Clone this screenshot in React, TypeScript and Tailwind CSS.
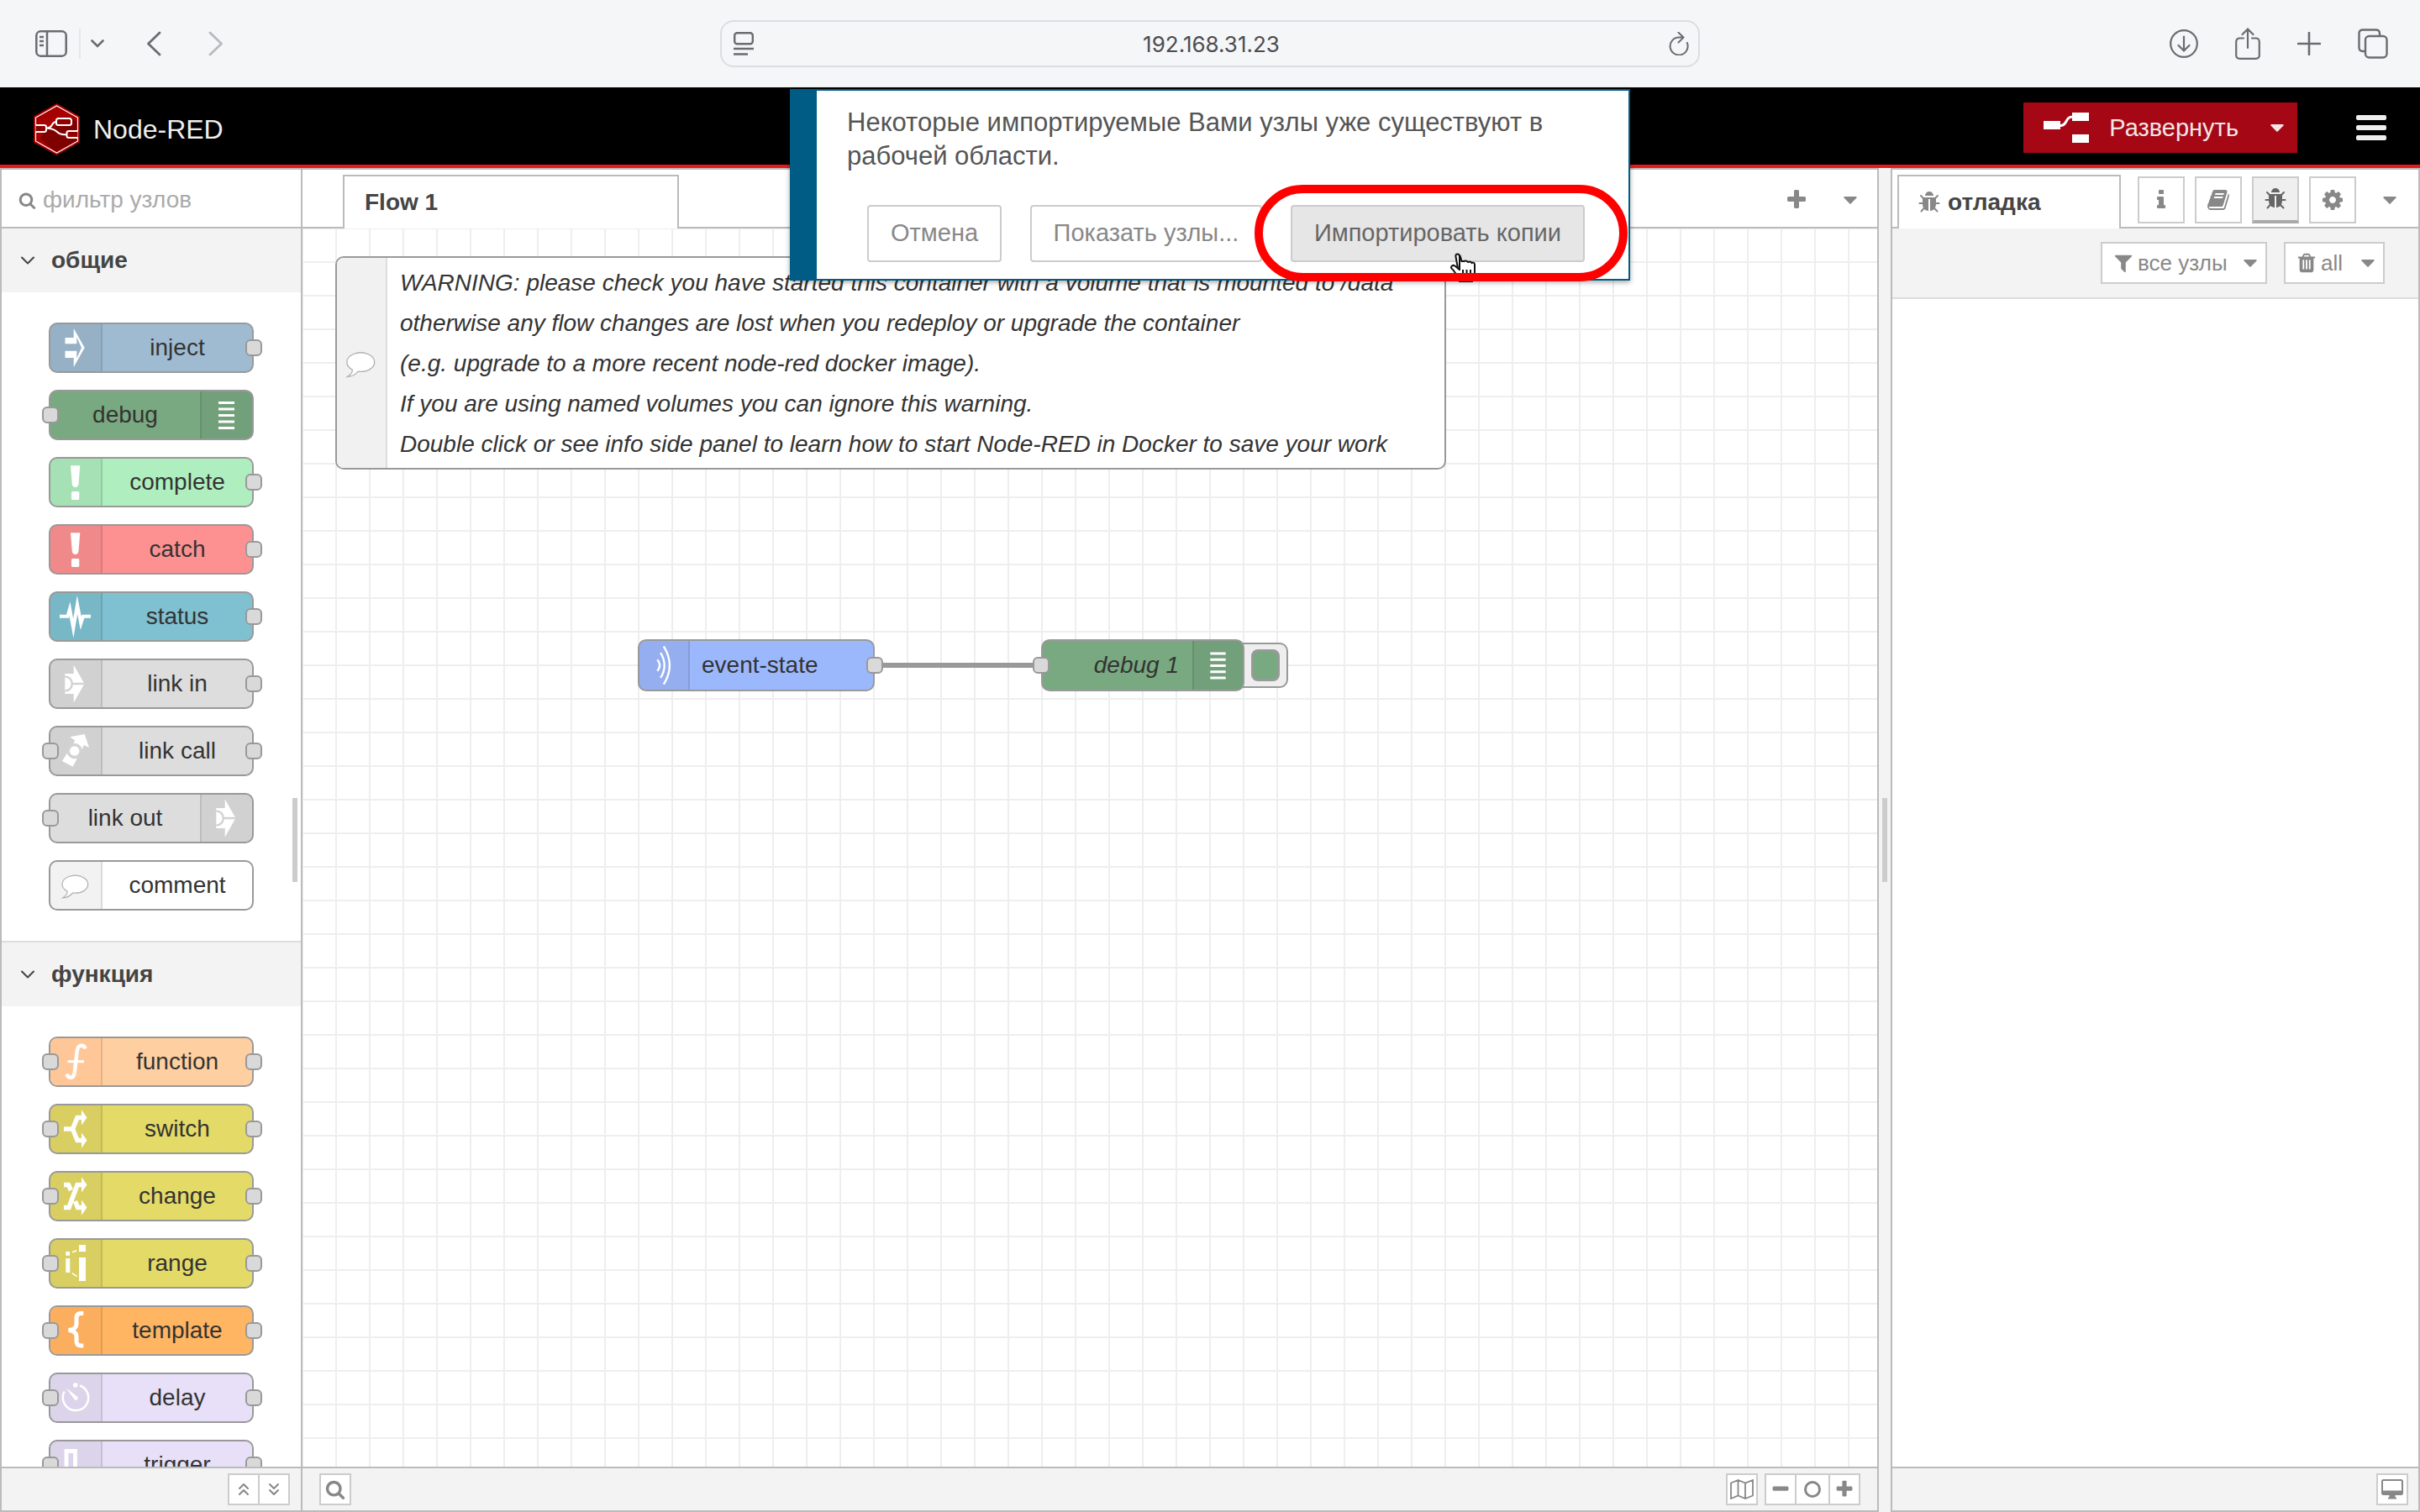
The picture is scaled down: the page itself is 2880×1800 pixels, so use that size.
import { ReactNode } from "react";
import { ChevronDown, ChevronsDown, ChevronsUp } from "lucide-react";

// Font Awesome 4 glyphs, 1792 units per em
const glyphs = {
  search:
    "M1216 832q0-185-131.5-316.5t-316.5-131.5-316.5 131.5-131.5 316.5 131.5 316.5 316.5 131.5 316.5-131.5 131.5-316.5zm512 832q0 52-38 90t-90 38q-54 0-90-38l-343-342q-179 124-399 124-143 0-273.5-55.5t-225-150-150-225-55.5-273.5 55.5-273.5 150-225 225-150 273.5-55.5 273.5 55.5 225 150 150 225 55.5 273.5q0 220-124 399l343 343q37 37 37 90z",
  cog: "M1152 896q0-106-75-181t-181-75-181 75-75 181 75 181 181 75 181-75 75-181zm512-109v222q0 12-8 23t-20 13l-185 28q-19 54-39 91 35 50 107 138 10 12 10 25t-9 23q-27 37-99 108t-94 71q-12 0-26-9l-138-108q-44 23-91 38-16 136-29 186-7 28-36 28h-222q-14 0-24.5-8.5t-11.5-21.5l-28-184q-49-16-90-37l-141 107q-10 9-25 9-14 0-25-11-126-114-165-168-7-10-7-23 0-12 8-23 15-21 51-66.5t54-70.5q-27-50-41-99l-183-27q-13-2-21-12.5t-8-23.5v-222q0-12 8-23t19-13l186-28q14-46 39-92-40-57-107-138-10-12-10-24 0-10 9-23 26-36 98.5-107.5t94.5-71.5q13 0 26 10l138 107q44-23 91-38 16-136 29-186 7-28 36-28h222q14 0 24.5 8.5t11.5 21.5l28 184q49 16 90 37l142-107q9-9 24-9 13 0 25 10 129 119 165 170 7 8 7 22 0 12-8 23-15 21-51 66.5t-54 70.5q26 50 41 98l183 28q13 2 21 12.5t8 23.5z",
  bug: "M1696 960q0 26-19 45t-45 19h-224q0 171-67 290l208 209q19 19 19 45t-19 45q-18 19-45 19t-45-19l-198-197q-5 5-15 13t-42 28.5-65 36.5-82 29-97 13v-896h-128v896q-51 0-101.5-13.5t-87-33-66-39-43.5-32.5l-15-14-183 207q-20 21-48 21-24 0-43-16-19-18-20.5-44.5t15.5-46.5l202-227q-58-114-58-274h-224q-26 0-45-19t-19-45 19-45 45-19h224v-294l-173-173q-19-19-19-45t19-45 45-19 45 19l173 173h844l173-173q19-19 45-19t45 19 19 45-19 45l-173 173v294h224q26 0 45 19t19 45zm-480-576h-640q0-133 93.5-226.5t226.5-93.5 226.5 93.5 93.5 226.5z",
  plus: "M1600 736v192q0 40-28 68t-68 28h-416v416q0 40-28 68t-68 28h-192q-40 0-68-28t-28-68v-416h-416q-40 0-68-28t-28-68v-192q0-40 28-68t68-28h416v-416q0-40 28-68t68-28h192q40 0 68 28t28 68v416h416q40 0 68 28t28 68z",
  minus:
    "M1600 736v192q0 40-28 68t-68 28h-1216q-40 0-68-28t-28-68v-192q0-40 28-68t68-28h1216q40 0 68 28t28 68z",
  filter:
    "M1595 295q17 41-14 70l-493 493v742q0 42-39 59-13 5-25 5-27 0-45-19l-256-256q-19-19-19-45v-486l-493-493q-31-29-14-70 17-39 59-39h1280q42 0 59 39z",
  trash:
    "M704 1376v-704q0-14-9-23t-23-9h-64q-14 0-23 9t-9 23v704q0 14 9 23t23 9h64q14 0 23-9t9-23zm256 0v-704q0-14-9-23t-23-9h-64q-14 0-23 9t-9 23v704q0 14 9 23t23 9h64q14 0 23-9t9-23zm256 0v-704q0-14-9-23t-23-9h-64q-14 0-23 9t-9 23v704q0 14 9 23t23 9h64q14 0 23-9t9-23zm-544-992h448l-48-117q-7-9-17-11h-317q-10 2-17 11zm928 32v64q0 14-9 23t-23 9h-96v948q0 83-47 143.5t-113 60.5h-832q-66 0-113-58.5t-47-141.5v-952h-96q-14 0-23-9t-9-23v-64q0-14 9-23t23-9h309l70-167q15-37 54-63t79-26h320q40 0 79 26t54 63l70 167h309q14 0 23 9t9 23z",
  info: "M1216 1344v128q0 26-19 45t-45 19h-512q-26 0-45-19t-19-45v-128q0-26 19-45t45-19h64v-384h-64q-26 0-45-19t-19-45v-128q0-26 19-45t45-19h384q26 0 45 19t19 45v576h64q26 0 45 19t19 45zm-128-1152v192q0 26-19 45t-45 19h-256q-26 0-45-19t-19-45v-192q0-26 19-45t45-19h256q26 0 45 19t19 45z",
  book: "M1703 478q40 57 18 129l-275 906q-19 64-76.5 107.5t-122.5 43.5h-923q-77 0-148.5-53.5t-99.5-131.5q-24-67-2-127 0-4 3-27t4-37q1-8-3-21.5t-3-19.5q2-11 8-21t16.5-23.5 16.5-23.5q23-38 45-91.5t30-91.5q3-10 .5-30t-.5-28q3-11 17-28t17-23q21-36 42-92t25-90q1-9-2.5-32t.5-28q4-13 22-30.5t22-22.5q19-26 42.5-84.5t27.5-96.5q1-8-3-25.5t-2-26.5q2-8 9-18t18-23 17-21q8-12 16.5-30.5t15-35 16-36 19.5-32 26.5-23.5 36-11.5 47.5 5.5l-1 3q38-9 51-9h761q74 0 114 56t18 130l-274 906q-36 119-71.5 153.5t-128.5 34.5h-869q-27 0-38 15-11 16-1 43 24 70 144 70h923q29 0 56-15.5t35-41.5l300-987q7-22 5-57 38 15 59 43zm-1064 2q-4 13 2 22.5t20 9.5h608q13 0 25.5-9.5t16.5-22.5l21-64q4-13-2-22.5t-20-9.5h-608q-13 0-25.5 9.5t-16.5 22.5zm-83 256q-4 13 2 22.5t20 9.5h608q13 0 25.5-9.5t16.5-22.5l21-64q4-13-2-22.5t-20-9.5h-608q-13 0-25.5 9.5t-16.5 22.5z",
};

const Glyph = ({
  name,
  className = "size-7",
}: {
  name: keyof typeof glyphs;
  className?: string;
}) => (
  <svg viewBox="0 0 1792 1792" fill="currentColor" className={`shrink-0 ${className}`}>
    <path d={glyphs[name]} />
  </svg>
);

const Caret = () => (
  <svg viewBox="0 0 16 9" fill="currentColor" className="h-[9px] w-4 shrink-0">
    <path d="M1 0h14q1 .5.5 1.500L8.700 8.500q-.7.700-1.400 0L.5 1.500Q0 .5 1 0z" />
  </svg>
);

// icons of the flow nodes, drawn on a 60x56 field
const linkArrow = (
  <>
    <path d="M17.300 16H27.700V5.500L40.500 28 27.700 50.500V40H17.300z" fill="#fff" />
    <path d="M17.300 19.500a8.500 8.500 0 0 1 0 17M26 28H41" fill="none" stroke="#d3d3d3" strokeWidth="2.500" />
  </>
);

const envelope = (
  <path
    d="M26.500 37A15.300 10.500 0 1 0 20 35Q21 38.500 14.500 43Q22 42.500 26.500 37z"
    fill="#fff"
    stroke="#b0b0b0"
    strokeWidth="1.200"
  />
);

const bang = (
  <g fill="#fff">
    <path d="M24 8.300h11.300l-1.800 22q-.4 3.700-3.900 3.700t-3.800-3.700z" />
    <rect x="25" y="39" width="9.300" height="10" rx="1.500" />
  </g>
);

const nodeIcons = {
  inject: (
    <path
      d="M17.500 16H27.700V5L40.700 28 27.700 51V40H17.500V31.700H31.300V40.500L37 28 31.300 15.500V23.300H17.500z"
      fill="#fff"
    />
  ),
  debug: (
    <path d="M20 12h19v3H20zM20 19.500h19v3H20zM20 27h19v3H20zM20 34.500h19v3H20zM20 42h19v3H20z" fill="#fff" />
  ),
  bang,
  status: (
    <path
      d="M11 27.700H20.500L23 19 27.300 42 32 14 36.300 36 39 27.700H48"
      fill="none"
      stroke="#fff"
      strokeWidth="4"
      strokeMiterlimit="12"
    />
  ),
  link: linkArrow,
  linkCall: (
    <>
      <path d="M14 40 29.300 15.500 23.300 11.300 40.700 8 46 24 40 21 26.700 46.700z" fill="#fff" />
      <circle cx="28.700" cy="28" r="7.500" fill="#fff" stroke="#d3d3d3" strokeWidth="3.500" />
    </>
  ),
  comment: envelope,
  function: (
    <g fill="none" stroke="#fff">
      <path
        d="M41.500 12.500Q40.500 8 36 8.800Q32.300 9.500 31.500 17L29 39Q28.300 46.800 24 46.800Q20.500 46.800 19.700 42.500"
        strokeWidth="4.500"
      />
      <path d="M20.500 27.700H40" strokeWidth="3" />
    </g>
  ),
  switch: (
    <g fill="#fff">
      <path d="M16 28H26.500L32 14.500H38M26.500 28L32 41.500H38" fill="none" stroke="#fff" strokeWidth="5.500" />
      <path d="M37 5.300L43.500 14.500 37 23.500zM37 32.500L43.500 41.500 37 50.700z" />
    </g>
  ),
  change: (
    <g fill="#fff">
      <path
        d="M16 41.500H22L32 14.500H38M16 14.500H21.500L24.500 21M29.500 34L32.500 41.500H38"
        fill="none"
        stroke="#fff"
        strokeWidth="5.500"
      />
      <path d="M37 5.300L43.500 14.500 37 23.500zM37 32.500L43.500 41.500 37 50.700z" />
    </g>
  ),
  range: (
    <>
      <path d="M18.300 14H23V18.700H18.300zM18.300 22H23.300V39H18.300zM34 6h8v8h-8zM34 21h8v28h-8z" fill="#fff" />
      <path d="M26 14.700L31.300 12.700M25.700 39.700L31.700 43.700" stroke="#fff" strokeWidth="1.500" />
    </>
  ),
  template: (
    <path
      d="M39.300 7.500H36.500Q31 7.500 31 13V20Q31 26.500 21.500 27.500Q31 28.500 31 35V40.500Q31 46 36.500 46H39.300"
      fill="none"
      stroke="#fff"
      strokeWidth="5"
    />
  ),
  delay: (
    <>
      <path d="M35 13.500A15.200 15.200 0 1 1 16.700 20.500" fill="none" stroke="#fff" strokeWidth="2.500" />
      <circle cx="29.700" cy="13" r="2.800" fill="#fff" />
      <path d="M18.300 16L32 26.800a2.300 2.300 0 0 1-3.300 3.300z" fill="#fff" />
    </>
  ),
  trigger: <path d="M19 56V11.500H29.500V56" fill="none" stroke="#fff" strokeWidth="4.800" />,
  event: (
    <path
      d="M29.800 4.500Q44.500 28 29.800 51.500M26 12.500Q35.500 28 26 43.500M22 21Q28 28 22 35"
      fill="none"
      stroke="#fff"
      strokeWidth="2.500"
    />
  ),
};

type NodeProps = {
  label: string;
  color: string;
  icon: keyof typeof nodeIcons;
  shade?: string;
  input?: boolean;
  output?: boolean;
  iconRight?: boolean;
};

const Port = ({ className }: { className: string }) => (
  <span
    className={`absolute top-1/2 size-5 -translate-y-1/2 rounded-md border-2 border-[#999] bg-[#d9d9d9] ${className}`}
  />
);

const NodeIcon = ({
  icon,
  right,
  shade = "bg-black/5",
  width = "w-[62px]",
}: {
  icon: keyof typeof nodeIcons;
  right?: boolean;
  shade?: string;
  width?: string;
}) => (
  <span
    className={`flex shrink-0 items-center border-black/10 ${width} ${shade} ${
      right ? "order-last rounded-r-lg border-l-2" : "rounded-l-lg border-r-2"
    }`}
  >
    <svg viewBox="0 0 60 56" className="h-14 w-15">
      {nodeIcons[icon]}
    </svg>
  </span>
);

const PaletteNode = ({ label, color, icon, shade, input, output, iconRight }: NodeProps) => (
  <li
    className={`relative flex h-15 rounded-[10px] border-2 border-[#999] text-[28px] text-[#333] ${color}`}
  >
    <NodeIcon icon={icon} right={iconRight} shade={shade} />
    <span className="flex-1 self-center text-center leading-8">{label}</span>
    {input && <Port className="-left-[10px]" />}
    {output && <Port className="-right-3" />}
  </li>
);

const categories: { title: string; nodes: NodeProps[] }[] = [
  {
    title: "общие",
    nodes: [
      { label: "inject", color: "bg-[#9fbbd1]", icon: "inject", output: true },
      { label: "debug", color: "bg-[#79a981]", icon: "debug", input: true, iconRight: true },
      { label: "complete", color: "bg-[#aeeebf]", icon: "bang", output: true },
      { label: "catch", color: "bg-[#fd9191]", icon: "bang", output: true },
      { label: "status", color: "bg-[#7fc1d1]", icon: "status", output: true },
      { label: "link in", color: "bg-[#dddddd]", icon: "link", output: true },
      { label: "link call", color: "bg-[#dddddd]", icon: "linkCall", input: true, output: true },
      { label: "link out", color: "bg-[#dddddd]", icon: "link", input: true, iconRight: true },
      { label: "comment", color: "bg-white", icon: "comment" },
    ],
  },
  {
    title: "функция",
    nodes: [
      { label: "function", color: "bg-[#fecfa0]", shade: "bg-[#ffc698]", icon: "function", input: true, output: true },
      { label: "switch", color: "bg-[#e4da67]", icon: "switch", input: true, output: true },
      { label: "change", color: "bg-[#e4da67]", icon: "change", input: true, output: true },
      { label: "range", color: "bg-[#e4da67]", icon: "range", input: true, output: true },
      { label: "template", color: "bg-[#ffb562]", shade: "bg-[#fbae5d]", icon: "template", input: true, output: true },
      { label: "delay", color: "bg-[#e7e0f8]", icon: "delay", input: true, output: true },
      { label: "trigger", color: "bg-[#e7e0f8]", icon: "trigger", input: true, output: true },
    ],
  },
];

const BrowserBar = () => (
  <div className="grid h-26 shrink-0 grid-cols-[1fr_1166px_1fr] items-center bg-[#f5f6f8] text-[#6c6c70]">
    <div className="flex items-center pl-[42px]">
      <button aria-label="Sidebar">
        <svg viewBox="0 0 38 32" className="h-8 w-[38px]" fill="none" stroke="currentColor" strokeWidth="2.500">
          <rect x="1.300" y="1.300" width="35.400" height="29.400" rx="5" />
          <path d="M14 1V31M5 8h5M5 13h5M5 18h5" />
        </svg>
      </button>
      <span className="ml-3.5 h-9 w-0.5 bg-[#e6e7e9]" />
      <button aria-label="Tab groups" className="ml-3">
        <svg viewBox="0 0 16 10" className="h-2.5 w-4" fill="none" stroke="currentColor" strokeWidth="2.600">
          <path d="M1.500 1.500L8 8l6.500-6.500" strokeLinecap="round" />
        </svg>
      </button>
      <button aria-label="Back" className="ml-[50px]">
        <svg viewBox="0 0 18 30" className="h-[30px] w-[18px]" fill="none" stroke="currentColor" strokeWidth="2.800">
          <path d="M16 2L2.500 15 16 28" strokeLinecap="round" strokeLinejoin="round" />
        </svg>
      </button>
      <button aria-label="Forward" className="ml-14 text-[#b9babd]">
        <svg viewBox="0 0 18 30" className="h-[30px] w-[18px]" fill="none" stroke="currentColor" strokeWidth="2.800">
          <path d="M2 2l13.500 13L2 28" strokeLinecap="round" strokeLinejoin="round" />
        </svg>
      </button>
    </div>
    <div className="flex h-14 items-center rounded-2xl border-2 border-[#dcdde0] pr-[11px] pl-3.5">
      <button aria-label="Reader">
        <svg viewBox="0 0 24 28" className="h-7 w-6" fill="none" stroke="currentColor" strokeWidth="2.400">
          <rect x="1.200" y="1.200" width="21.600" height="13" rx="3" />
          <path d="M0 20h24M0 26.500h17" />
        </svg>
      </button>
      <input
        aria-label="Address"
        defaultValue="192.168.31.23"
        className="min-w-0 flex-1 bg-transparent text-center font-['Inter',sans-serif] text-[26px] text-[#4c4c4e] outline-none"
      />
      <button aria-label="Reload">
        <svg viewBox="0 0 24 28" className="h-7 w-6" fill="none" stroke="currentColor" strokeWidth="2">
          <path d="M21.800 13A10.500 10.500 0 1 1 12 6.500h5M11.500 .8L17.500 6.600 11.500 12.500" strokeLinecap="round" />
        </svg>
      </button>
    </div>
    <div className="flex items-center justify-end gap-11 pr-[38px]">
      <button aria-label="Downloads">
        <svg viewBox="0 0 34 34" className="size-[34px]" fill="none" stroke="currentColor" strokeWidth="2.200">
          <circle cx="17" cy="17" r="15.800" />
          <path d="M17 8.500V25M10.500 19l6.500 6.500 6.500-6.500" strokeLinecap="round" />
        </svg>
      </button>
      <button aria-label="Share">
        <svg viewBox="0 0 30 38" className="h-[38px] w-[30px]" fill="none" stroke="currentColor" strokeWidth="2.200">
          <path
            d="M10 12.500H5.500Q1.200 12.500 1.200 17V32.500Q1.200 36.800 5.500 36.800H24.500Q28.800 36.800 28.800 32.500V17Q28.800 12.500 24.500 12.500H20M15 24V2M8.500 8L15 1.600 21.500 8"
            strokeLinecap="round"
          />
        </svg>
      </button>
      <button aria-label="New tab">
        <svg viewBox="0 0 28 28" className="size-7" fill="none" stroke="currentColor" strokeWidth="2.600">
          <path d="M14 1V27M1 14H27" strokeLinecap="round" />
        </svg>
      </button>
      <button aria-label="Tabs">
        <svg viewBox="0 0 36 36" className="size-9" fill="none" stroke="currentColor" strokeWidth="2.400">
          <path d="M9 27H6Q1.500 27 1.500 22.500V6Q1.500 1.500 6 1.500H21.500Q26 1.500 26 6V9" />
          <rect x="9" y="9" width="25.500" height="25.500" rx="4.500" />
        </svg>
      </button>
    </div>
  </div>
);

const Header = () => (
  <header className="flex h-24 shrink-0 items-center border-b-4 border-[#e31b1b] bg-black pt-1 pr-10 pl-10 text-[#eee]">
    <a href="#" className="flex items-center gap-4 pt-1 text-[32px] leading-10">
      <svg viewBox="0 0 55 62" className="h-[62px] w-[55px]">
        <path d="M27.500 0L55 15.500V46.500L27.500 62 0 46.500V15.500z" fill="#a60000" />
        <path d="M46 17L53 24V45L27.500 59 8 42 16 30l14-4z" fill="#7f0000" />
        <path d="M27.500 3L52.500 17V45L27.500 59 2.500 45V17z" fill="none" stroke="#fff" strokeWidth="1.200" />
        <g fill="#8f0000" stroke="#fff" strokeWidth="2">
          <path d="M15 29.500Q20 29.500 22 25.500T28 22M15 29.500Q24 30 28 34T40 37" fill="none" />
          <rect x="27" y="18" width="18" height="8" rx="2.500" />
          <path d="M2.500 26H12.500Q15 26 15 28V31.500Q15 34 12.500 34H2.500M52.500 33H42Q39.500 33 39.500 35V39Q39.500 41 42 41H52.500" />
        </g>
      </svg>
      Node-RED
    </a>
    <div className="ml-auto flex h-15 items-center bg-[#a50814] pr-4 text-[#f4e6e7]">
      <button className="flex items-center gap-6 pl-6 text-[29px] leading-8">
        <svg viewBox="0 0 54 38" className="h-[38px] w-[54px]">
          <path d="M0 11h20v10H0zM34 1h20v10H34zM34 27h20v10H34z" fill="#fff" />
          <path d="M20 16.500C29 16.500 25 6 35 6" fill="none" stroke="#fff" strokeWidth="3" />
        </svg>
        Развернуть
      </button>
      <button aria-label="Параметры развёртывания" className="ml-[38px]">
        <Caret />
      </button>
    </div>
    <button aria-label="Меню" className="ml-[70px] flex flex-col gap-[6px]">
      <span className="h-[6px] w-9 rounded-xs bg-[#eee]" />
      <span className="h-[6px] w-9 rounded-xs bg-[#eee]" />
      <span className="h-[6px] w-9 rounded-xs bg-[#eee]" />
    </button>
  </header>
);

const FooterButton = ({ label, children }: { label: string; children: ReactNode }) => (
  <button
    aria-label={label}
    className="flex size-[38px] items-center justify-center border-2 border-[#ccc] bg-white text-[#888]"
  >
    {children}
  </button>
);

const Footer = ({ children }: { children: ReactNode }) => (
  <div className="flex h-[54px] shrink-0 items-center border-y-2 border-[#bbb] bg-[#f3f3f3]">
    {children}
  </div>
);

const Palette = () => (
  <aside className="relative flex w-90 shrink-0 flex-col border-x-2 border-[#bbb] bg-white">
    <label className="flex h-[72px] shrink-0 items-center gap-2 border-y-2 border-[#bbb] pt-1 pl-5 text-[#888]">
      <Glyph name="search" className="size-[21px]" />
      <input
        aria-label="фильтр узлов"
        placeholder="фильтр узлов"
        className="min-w-0 flex-1 text-[28px] leading-8 placeholder:text-[#aaa] outline-none"
      />
    </label>
    <div className="min-h-0 flex-1 overflow-hidden">
      {categories.map(({ title, nodes }) => (
        <section key={title} className="border-[#ddd] not-first:border-t-2">
          <button className="flex h-19 w-full items-center gap-3.5 bg-[#f3f3f3] pl-[17px] text-[28px] font-bold text-[#444]">
            <ChevronDown size={28} strokeWidth={1.800} />
            {title}
          </button>
          <ul className="flex flex-col gap-5 px-14 py-9">
            {nodes.map((node) => (
              <PaletteNode key={node.label} {...node} />
            ))}
          </ul>
        </section>
      ))}
    </div>
    <Footer>
      <div className="mr-[13px] ml-auto flex">
        <FooterButton label="Свернуть все">
          <ChevronsUp size={24} strokeWidth={2} />
        </FooterButton>
        <div className="-ml-0.5">
          <FooterButton label="Развернуть все">
            <ChevronsDown size={24} strokeWidth={2} />
          </FooterButton>
        </div>
      </div>
    </Footer>
    <div className="absolute top-1/2 right-1 h-25 w-1.5 -translate-y-1/2 bg-[#ccc]" />
  </aside>
);

const warning = [
  "WARNING: please check you have started this container with a volume that is mounted to /data",
  "otherwise any flow changes are lost when you redeploy or upgrade the container",
  "(e.g. upgrade to a more recent node-red docker image).",
  "If you are using named volumes you can ignore this warning.",
  "Double click or see info side panel to learn how to start Node-RED in Docker to save your work",
];

const Canvas = () => (
  <div className="relative min-h-0 flex-1 overflow-hidden bg-white bg-[linear-gradient(to_right,#eee_2px,transparent_2px),linear-gradient(to_bottom,#eee_2px,transparent_2px)] bg-size-[40px_40px] bg-position-[-1px_-1px] text-[28px] text-[#333]">
    <div className="absolute top-[33px] left-[39px] flex h-[254px] w-[1322px] rounded-[10px] border-2 border-[#999] bg-white">
      <span className="flex w-15 items-center rounded-l-lg border-r-2 border-[#ddd] bg-[#f1f1f1]">
        <svg viewBox="3 2 54 51" className="h-14 w-15">
          {envelope}
        </svg>
      </span>
      <div className="self-center pt-0.5 pl-[15px] leading-12 italic">
        {warning.map((line) => (
          <p key={line} className="whitespace-nowrap">
            {line}
          </p>
        ))}
      </div>
    </div>

    <span className="absolute top-[517px] left-[690px] h-1.5 w-[180px] bg-[#999]" />
    <div className="absolute top-[489px] left-[399px] flex h-[62px] w-[282px] rounded-[10px] border-2 border-[#999] bg-[#9cb8fd]">
      <NodeIcon icon="event" width="w-15" />
      <span className="self-center pl-3.5 leading-8">event-state</span>
      <Port className="-right-3" />
    </div>
    <button
      aria-label="debug 1"
      className="absolute top-[493px] left-[1105px] flex h-[54px] w-[68px] items-center justify-end rounded-[10px] border-2 border-[#999] bg-[#eee] pr-2"
    >
      <span className="h-[38px] w-[34px] rounded-lg border-3 border-[#999] bg-[#79a981]" />
    </button>
    <div className="absolute top-[489px] left-[879px] flex h-[62px] w-[242px] rounded-[10px] border-2 border-[#999] bg-[#79a981]">
      <NodeIcon icon="debug" right width="w-15" />
      <span className="flex-1 self-center pr-4 text-right leading-8 italic">debug 1</span>
      <Port className="-left-3" />
    </div>
  </div>
);

const Workspace = () => (
  <main className="flex min-w-0 flex-1 flex-col border-r-2 border-[#bbb]">
    <div className="flex h-[72px] shrink-0 items-end border-t-2 border-[#bbb] bg-white text-[#888]">
      <span className="w-12 self-stretch border-b-2 border-[#bbb]" />
      <button className="h-16 w-100 border-2 border-b-0 border-[#bbb] pl-6 text-left text-[28px] font-bold text-[#444]">
        Flow 1
      </button>
      <div className="flex flex-1 items-center justify-end gap-[42px] self-stretch border-b-2 border-[#bbb] pt-1 pr-6">
        <button aria-label="Добавить поток">
          <Glyph name="plus" />
        </button>
        <button aria-label="Список потоков">
          <Caret />
        </button>
      </div>
    </div>
    <Canvas />
    <Footer>
      <div className="flex flex-1 items-center px-5">
        <FooterButton label="Поиск">
          <Glyph name="search" className="size-6" />
        </FooterButton>
        <div className="mr-2 ml-auto">
          <FooterButton label="Карта">
            <svg viewBox="0 0 28 24" className="h-6 w-7" fill="none" stroke="currentColor" strokeWidth="1.800">
              <path d="M1 4.500L9.500 1 18 4.500 27 1V19.500L18 23 9.500 19.500 1 23zM9.500 1V19.500M18 4.500V23" />
            </svg>
          </FooterButton>
        </div>
        <FooterButton label="Уменьшить">
          <Glyph name="minus" className="size-6" />
        </FooterButton>
        <button
          aria-label="Сбросить масштаб"
          className="flex h-[38px] w-[38px] items-center justify-center border-y-2 border-[#ccc] bg-white text-[#888]"
        >
          <span className="size-5 rounded-full border-3 border-[#888]" />
        </button>
        <FooterButton label="Увеличить">
          <Glyph name="plus" className="size-6" />
        </FooterButton>
      </div>
    </Footer>
  </main>
);

const TabButton = ({ name, active }: { name: "info" | "book" | "bug" | "cog"; active?: boolean }) => (
  <button
    aria-label={name}
    className={`flex size-14 items-center justify-center border-2 border-[#ccc] ${
      active ? "border-b-4 border-b-[#aaa] bg-[#efefef] text-[#666]" : "bg-white text-[#888]"
    }`}
  >
    <Glyph name={name} />
  </button>
);

const Sidebar = () => (
  <aside className="flex w-[630px] shrink-0 flex-col border-x-2 border-[#bbb] bg-white text-[#888]">
    <div className="flex h-[72px] shrink-0 items-end border-t-2 border-[#bbb]">
      <span className="w-1.5 self-stretch border-b-2 border-[#bbb]" />
      <button className="flex h-16 w-[266px] items-center gap-2 border-2 border-b-0 border-[#bbb] pl-[22px] text-[28px] font-bold text-[#444]">
        <Glyph name="bug" className="size-7 text-[#888]" />
        отладка
      </button>
      <div className="flex flex-1 items-center justify-end gap-3 self-stretch border-b-2 border-[#bbb] pt-1 pr-[26px]">
        <TabButton name="info" />
        <TabButton name="book" />
        <TabButton name="bug" active />
        <TabButton name="cog" />
        <button aria-label="Вкладки" className="ml-5">
          <Caret />
        </button>
      </div>
    </div>
    <div className="flex h-21 shrink-0 items-center justify-end gap-5 border-b-2 border-[#ddd] bg-[#f3f3f3] pr-10 text-[26px]">
      <button className="flex h-[50px] w-[198px] items-center border-2 border-[#ccc] bg-white pr-2.5 pl-3">
        <Glyph name="filter" className="size-[26px]" />
        <span className="ml-1">все узлы</span>
        <span className="ml-auto">
          <Caret />
        </span>
      </button>
      <button className="flex h-[50px] w-30 items-center border-2 border-[#ccc] bg-white pr-2.5 pl-3">
        <Glyph name="trash" className="size-[26px]" />
        <span className="ml-1">all</span>
        <span className="ml-auto">
          <Caret />
        </span>
      </button>
    </div>
    <div className="flex-1" />
    <Footer>
      <div className="mr-3 ml-auto">
        <FooterButton label="Открыть в новом окне">
          <svg viewBox="0 0 26 24" className="h-6 w-[26px]" fill="currentColor">
            <path d="M2.500 0h21Q26 0 26 2.500V16.500Q26 19 23.500 19H16.500V21.500H18V23.500H8V21.500H9.500V19H2.500Q0 19 0 16.500V2.500Q0 0 2.500 0zM2 2.500V13.500H24V2.500Q24 2 23.500 2H2.500Q2 2 2 2.500z" />
          </svg>
        </FooterButton>
      </div>
    </Footer>
  </aside>
);

const Notification = () => (
  <div className="absolute top-[106px] left-1/2 h-[228px] w-[1000px] -translate-x-1/2 border-2 border-l-32 border-[#005c85] bg-white text-[#555] shadow-[0_2px_6px_rgba(0,0,0,0.35)]">
    <p className="pt-[18px] pr-16 pl-9 text-[31px] leading-10">
      Некоторые импортируемые Вами узлы уже существуют в рабочей области.
    </p>
    <div className="mt-[38px] flex justify-between pr-[52px] pl-15 text-[29px] text-[#888]">
      <button className="h-17 rounded-sm border-2 border-[#ccc] px-[26px]">Отмена</button>
      <button className="h-17 rounded-sm border-2 border-[#ccc] px-[26px]">Показать узлы...</button>
      <button className="h-17 rounded-sm border-2 border-[#ccc] bg-[#e6e6e6] px-[26px] text-[#666]">
        Импортировать копии
      </button>
    </div>
    <svg viewBox="0 0 32 36" className="absolute top-[193px] left-[754px] h-9 w-8">
      <path
        d="M11 21V4.500Q11 1.500 8.500 1.500T6.500 4.500L9 18.500 5.500 15.500Q3 14 1.500 16T3 20L9 28Q10.500 30 11 34H26Q27 29 29 26.500V14Q28.500 10.500 25.500 12Q24 9.500 21 11Q19 8.500 16 10L13.500 10 11.500 3"
        fill="#fff"
        stroke="#111"
        strokeWidth="2"
      />
      <path d="M15 20v8M19.500 20v8M24 20v8" stroke="#111" strokeWidth="2" />
    </svg>
    <div className="absolute top-28 left-[521px] h-[115px] w-[444px] rounded-[58px] border-10 border-[#f00]" />
  </div>
);

export default function App() {
  return (
    <div className="relative flex h-screen flex-col overflow-hidden bg-[#f3f3f3] font-['Liberation_Sans',Arial,sans-serif]">
      <BrowserBar />
      <Header />
      <div className="flex min-h-0 flex-1">
        <Palette />
        <Workspace />
        <div className="flex w-3.5 shrink-0 items-center justify-center bg-[#f3f3f3]">
          <span className="h-25 w-1.5 bg-[#ccc]" />
        </div>
        <Sidebar />
      </div>
      <Notification />
    </div>
  );
}
